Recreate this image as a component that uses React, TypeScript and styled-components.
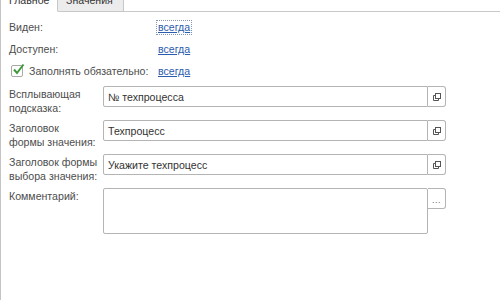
import React from "react";
import styled, { createGlobalStyle } from "styled-components";

const Global = createGlobalStyle`
  html, body {
    margin: 0;
    padding: 0;
    background: #fff;
    overflow: hidden;
  }
  body {
    font-family: "Liberation Sans", Arial, sans-serif;
    font-size: 10.6px;
    color: #4d4d4d;
  }
`;

const Frame = styled.div`
  width: 499px;
  height: 300px;
  border-left: 1px solid #c4c4c4;
  overflow: hidden;
`;

const TabBar = styled.div`
  display: flex;
  height: 23px;
  margin-top: -11px;
`;

const Tab = styled.div<{ $active?: boolean; $w: number }>`
  display: flex;
  align-items: center;
  width: ${(p) => p.$w}px;
  padding-left: 8px;
  box-sizing: border-box;
  height: 23px;
  color: #333;
  background: ${(p) => (p.$active ? "#fff" : "#ececec")};
  border-right: 1px solid #c8c8c8;
  border-bottom: 1px solid ${(p) => (p.$active ? "transparent" : "#c8c8c8")};
`;

const TabFill = styled.div`
  flex: 1;
  border-bottom: 1px solid #c8c8c8;
`;

const Body = styled.div`
  padding: 4px 0 0 8px;
`;

const TopGrid = styled.div`
  display: grid;
  grid-template-columns: 148px auto;
  grid-auto-rows: 22px;
  align-items: center;
`;

const Label = styled.div`
  color: #4d4d4d;
  white-space: nowrap;
`;

const CheckLabel = styled.label`
  display: flex;
  align-items: center;
  gap: 6px;
  margin-left: 2px;
  color: #4d4d4d;
  white-space: nowrap;
`;

const CheckBox = styled.span`
  flex: none;
  width: 12px;
  height: 12px;
  box-sizing: border-box;
  border: 1px solid #a8a8a8;
  border-radius: 2px;
  background: #fff;
  position: relative;
  & svg {
    position: absolute;
    left: 0px;
    top: -3px;
  }
`;

const LinkCell = styled.div``;

const Link = styled.a<{ $focused?: boolean }>`
  display: inline-block;
  color: #2b5cae;
  text-decoration: underline;
  line-height: 13px;
  padding: 0 1px;
  outline: ${(p) => (p.$focused ? "1px dotted #8494b4" : "none")};
  outline-offset: 0px;
  cursor: pointer;
`;

const FieldGrid = styled.div`
  display: grid;
  grid-template-columns: 94px 343px;
  grid-auto-rows: 28px;
  row-gap: 6px;
  margin-top: 4px;
`;

const FieldLabel = styled.div`
  padding-top: 2px;
  line-height: 13.5px;
  color: #4d4d4d;
  white-space: nowrap;
`;

const Field = styled.div`
  display: flex;
  align-items: flex-start;
`;

const Input = styled.div<{ $h?: number }>`
  flex: none;
  width: 325px;
  height: ${(p) => p.$h ?? 21}px;
  box-sizing: border-box;
  border: 1px solid #b4b4b4;
  border-radius: ${(p) => (p.$h ? "2px" : "2px 0 0 2px")};
  padding: 0 4px;
  display: flex;
  align-items: ${(p) => (p.$h ? "flex-start" : "center")};
  color: #333;
  background: #fff;
`;

const SideButton = styled.div`
  flex: none;
  width: 18px;
  height: 21px;
  box-sizing: border-box;
  border: 1px solid #b4b4b4;
  border-left: none;
  border-radius: 0 3px 3px 0;
  display: flex;
  align-items: center;
  justify-content: center;
  color: #777;
  background: #fff;
`;

const Dots = styled.span`
  font-size: 9px;
  letter-spacing: 0.5px;
  margin-top: 2px;
  color: #666;
`;

const OpenIcon = () => (
  <svg width="10" height="10" viewBox="0 0 10 10">
    <rect x="3.5" y="1.5" width="5" height="5" fill="none" stroke="#555" />
    <path d="M3.5 3.5 H1.5 V8.5 H6.5 V6.5" fill="none" stroke="#555" />
  </svg>
);

const Check = () => (
  <svg width="13" height="13" viewBox="0 0 13 13">
    <path d="M2 6.5 L5 10 L11.5 1.5" fill="none" stroke="#3d9a3a" strokeWidth="2" />
  </svg>
);

const fields = [
  { label: ["Всплывающая", "подсказка:"], value: "№ техпроцесса" },
  { label: ["Заголовок", "формы значения:"], value: "Техпроцесс" },
  { label: ["Заголовок формы", "выбора значения:"], value: "Укажите техпроцесс" },
];

export default function App() {
  return (
    <>
      <Global />
      <Frame>
        <TabBar>
          <Tab $active $w={57}>Главное</Tab>
          <Tab $w={66}>Значения</Tab>
          <TabFill />
        </TabBar>
        <Body>
          <TopGrid>
            <Label>Виден:</Label>
            <LinkCell>
              <Link $focused>всегда</Link>
            </LinkCell>
            <Label>Доступен:</Label>
            <LinkCell>
              <Link>всегда</Link>
            </LinkCell>
            <CheckLabel>
              <CheckBox>
                <Check />
              </CheckBox>
              Заполнять обязательно:
            </CheckLabel>
            <LinkCell>
              <Link>всегда</Link>
            </LinkCell>
          </TopGrid>
          <FieldGrid>
            {fields.map((f) => (
              <React.Fragment key={f.value}>
                <FieldLabel>
                  {f.label[0]}
                  <br />
                  {f.label[1]}
                </FieldLabel>
                <Field>
                  <Input>{f.value}</Input>
                  <SideButton>
                    <OpenIcon />
                  </SideButton>
                </Field>
              </React.Fragment>
            ))}
            <FieldLabel>Комментарий:</FieldLabel>
            <Field>
              <Input $h={46} />
              <SideButton>
                <Dots>...</Dots>
              </SideButton>
            </Field>
          </FieldGrid>
        </Body>
      </Frame>
    </>
  );
}
